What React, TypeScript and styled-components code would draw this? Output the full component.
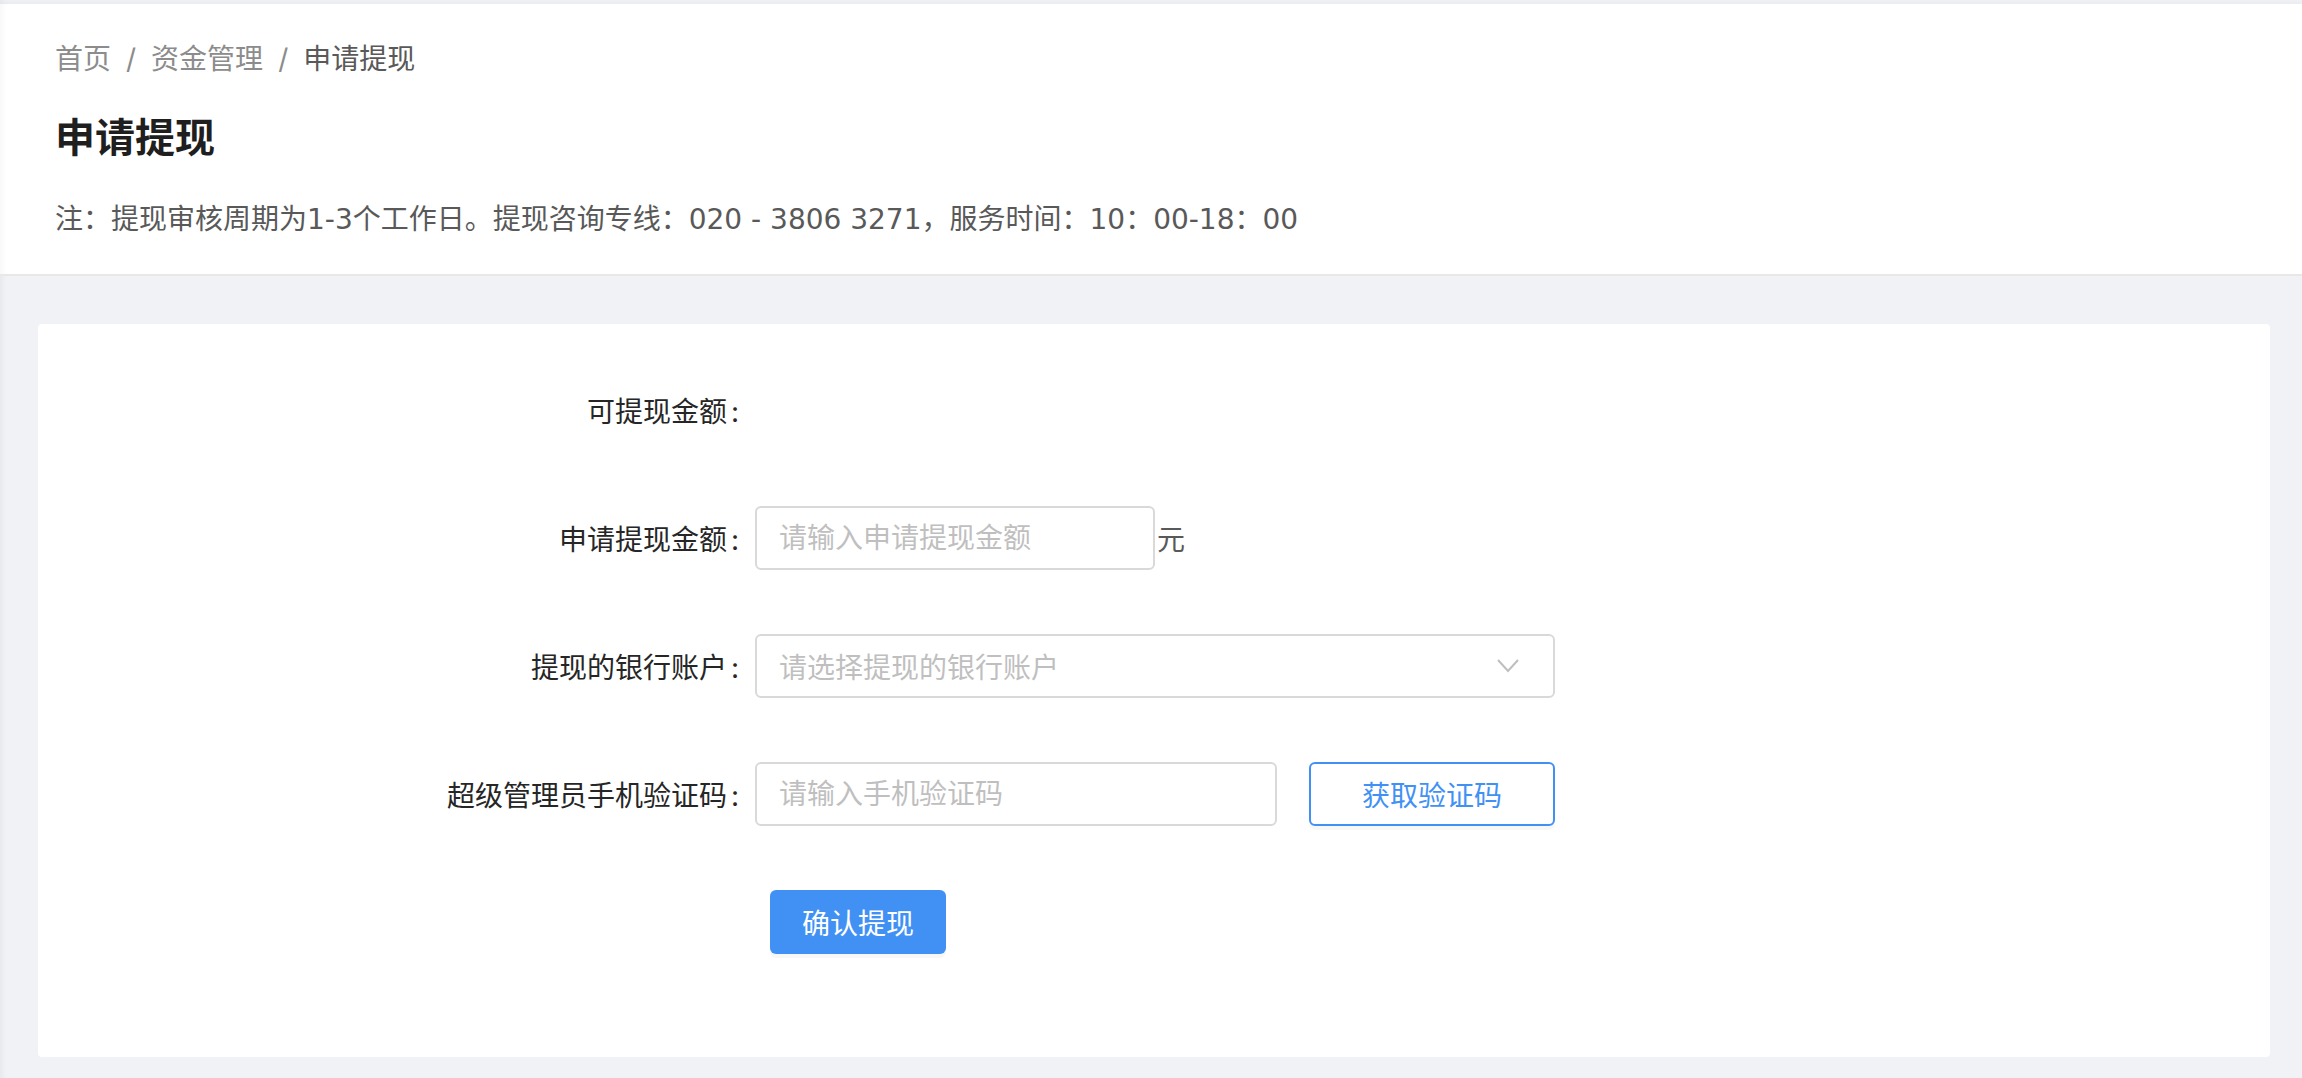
import styled, { createGlobalStyle } from 'styled-components';

const GlobalStyle = createGlobalStyle`
  html, body {
    margin: 0;
    padding: 0;
    background: #f0f2f5;
  }
  body {
    font-family: Inter, "Noto Sans CJK SC", sans-serif;
    -webkit-font-smoothing: antialiased;
  }
  * {
    box-sizing: border-box;
  }
`;

const Page = styled.div`
  min-height: 1078px;
  padding-top: 4px;
  background: #f0f2f5;
  box-shadow: inset 6px 0 6px -4px rgba(0, 0, 0, 0.05);
`;

const Header = styled.header`
  background: #fff;
  padding: 34px 48px 32px 55px;
  border-bottom: 2px solid #e8e8e8;
  box-shadow: inset 6px 0 6px -4px rgba(0, 0, 0, 0.04), 0 -2px 4px rgba(0, 0, 0, 0.03);
`;

const Breadcrumb = styled.nav`
  display: flex;
  align-items: center;
  font-size: 28px;
  line-height: 42px;
`;

const Crumb = styled.span<{ $current?: boolean }>`
  color: ${(p) => (p.$current ? '#595959' : '#8c8c8c')};
`;

const Separator = styled.span`
  margin: 0 15px;
  color: #8c8c8c;
`;

const Title = styled.h1`
  margin: 30px 0 0;
  font-size: 40px;
  line-height: 56px;
  font-weight: 700;
  color: #1f1f1f;
`;

const Note = styled.p`
  margin: 32px 0 0;
  font-family: "DejaVu Sans", "Noto Sans CJK SC", sans-serif;
  font-size: 28px;
  line-height: 44px;
  color: #595959;
`;

const Content = styled.main`
  padding: 48px 32px 21px 38px;
`;

const Card = styled.section`
  background: #fff;
  border-radius: 4px;
  height: 733px;
  padding-top: 54px;
`;

const Row = styled.div`
  display: flex;
  align-items: center;
  height: 64px;
  margin-bottom: 64px;
`;

const Label = styled.label`
  width: 717px;
  flex-shrink: 0;
  padding-right: 16px;
  text-align: right;
  font-size: 28px;
  color: #262626;

  &::after {
    content: ':';
    margin-left: 4px;
  }
`;

const Control = styled.div`
  display: flex;
  align-items: center;
`;

const Input = styled.input<{ $width: number }>`
  width: ${(p) => p.$width}px;
  height: 64px;
  padding: 0 22px;
  border: 2px solid #d9d9d9;
  border-radius: 6px;
  font-family: inherit;
  font-size: 28px;
  color: #262626;
  outline: none;
  background: #fff;

  &::placeholder {
    color: #bfbfbf;
  }
`;

const Unit = styled.span`
  margin-left: 2px;
  font-size: 28px;
  color: #595959;
`;

const Select = styled.div`
  width: 800px;
  height: 64px;
  padding: 0 24px 0 22px;
  border: 2px solid #d9d9d9;
  border-radius: 6px;
  display: flex;
  align-items: center;
  justify-content: space-between;
  background: #fff;
`;

const Placeholder = styled.span`
  font-size: 28px;
  color: #bfbfbf;
`;

const Chevron = styled.svg`
  width: 24px;
  height: 16px;
  margin-right: 9px;
`;

const OutlineButton = styled.button`
  width: 246px;
  height: 64px;
  margin-left: 32px;
  border: 2px solid #4191f5;
  border-radius: 6px;
  background: #fff;
  color: #4191f5;
  font-family: inherit;
  font-size: 28px;
  box-shadow: 0 4px 0 rgba(0, 0, 0, 0.03);
  cursor: pointer;
`;

const PrimaryButton = styled.button`
  width: 176px;
  height: 64px;
  margin-left: 15px;
  border: none;
  border-radius: 6px;
  background: #4191f5;
  color: #fff;
  font-family: inherit;
  font-size: 28px;
  box-shadow: 0 4px 0 rgba(0, 0, 0, 0.03);
  cursor: pointer;
`;

const Spacer = styled.div`
  width: 717px;
  flex-shrink: 0;
`;

const App = () => {
  return (
    <Page>
      <GlobalStyle />
      <Header>
        <Breadcrumb>
          <Crumb>首页</Crumb>
          <Separator>/</Separator>
          <Crumb>资金管理</Crumb>
          <Separator>/</Separator>
          <Crumb $current>申请提现</Crumb>
        </Breadcrumb>
        <Title>申请提现</Title>
        <Note>注：提现审核周期为1-3个工作日。提现咨询专线：020 - 3806 3271，服务时间：10：00-18：00</Note>
      </Header>
      <Content>
        <Card>
          <Row>
            <Label>可提现金额</Label>
          </Row>
          <Row>
            <Label>申请提现金额</Label>
            <Control>
              <Input $width={400} placeholder="请输入申请提现金额" />
              <Unit>元</Unit>
            </Control>
          </Row>
          <Row>
            <Label>提现的银行账户</Label>
            <Select>
              <Placeholder>请选择提现的银行账户</Placeholder>
              <Chevron viewBox="0 0 24 16" fill="none">
                <polyline points="2,2 12,13 22,2" stroke="#bfbfbf" strokeWidth="2" />
              </Chevron>
            </Select>
          </Row>
          <Row>
            <Label>超级管理员手机验证码</Label>
            <Control>
              <Input $width={522} placeholder="请输入手机验证码" />
              <OutlineButton>获取验证码</OutlineButton>
            </Control>
          </Row>
          <Row>
            <Spacer />
            <PrimaryButton>确认提现</PrimaryButton>
          </Row>
        </Card>
      </Content>
    </Page>
  );
};

export default App;
